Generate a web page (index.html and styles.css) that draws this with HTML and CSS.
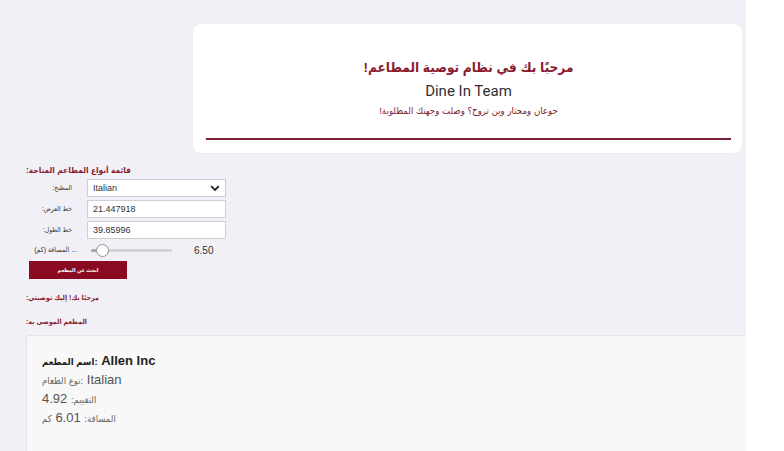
FILE: index.html
```html
<!DOCTYPE html>
<html lang="ar">
<head>
<meta charset="utf-8">
<title>Dine In Team</title>
<link rel="stylesheet" href="styles.css">
</head>
<body>
<div class="app">
  <div class="header-row">
    <div class="header-card">
      <h1 class="title" dir="rtl">مرحبًا بك في نظام توصية المطاعم!</h1>
      <div class="team">Dine In Team</div>
      <p class="subtitle" dir="rtl">جوعان ومحتار وين تروح؟ وصلت وجهتك المطلوبة!</p>
      <div class="rule"></div>
    </div>
  </div>

  <section class="form">
    <div class="form-title rtl">قائمة أنواع المطاعم المتاحة:</div>
    <div class="grid">
      <label class="lbl" dir="rtl">المطبخ:</label>
      <div class="box select">
        <span>Italian</span>
        <svg class="chev" width="10" height="7" viewBox="0 0 10 7"><path d="M1.2 1.2 L5 5 L8.8 1.2" fill="none" stroke="#222" stroke-width="1.8"/></svg>
      </div>
      <label class="lbl" dir="rtl">خط العرض:</label>
      <div class="box">21.447918</div>
      <label class="lbl" dir="rtl">خط الطول:</label>
      <div class="box">39.85996</div>
      <label class="lbl slbl">المسافة (كم) ...</label>
      <div class="slider">
        <div class="track"><div class="fill"></div><div class="thumb"></div></div>
        <span class="val">6.50</span>
      </div>
    </div>
    <button class="btn" dir="rtl">ابحث عن المطعم</button>
    <div class="note rtl">مرحبًا بك! إليك توصيتي:</div>
    <div class="note second rtl">المطعم الموصى به:</div>
  </section>

  <section class="card">
    <div class="name"><span class="ar">اسم المطعم:</span> Allen Inc</div>
    <div class="line"><span class="ar">نوع الطعام:</span> Italian</div>
    <div class="line"><span class="ar">التقييم:</span> 4.92</div>
    <div class="line"><span class="ar">المسافة:</span> 6.01 <span class="ar">كم</span></div>
  </section>
</div>
</body>
</html>
```

FILE: styles.css
```css
* { box-sizing: border-box; }
html, body { margin: 0; padding: 0; background: #ffffff; }
body { font-family: "Liberation Sans", "DejaVu Sans Condensed", "DejaVu Sans", sans-serif; }

.app {
  width: 746px;
  height: 451px;
  overflow: hidden;
  background: #f0f0f6;
  padding-top: 24px;
}

.header-row { padding-left: 193px; }
.header-card {
  width: 549px;
  height: 129px;
  background: #ffffff;
  border-radius: 8px;
  box-shadow: 0 0 2px rgba(0,0,0,0.04);
  padding: 33px 11px 0 13px;
  text-align: center;
}
.title {
  margin: 0;
  font-size: 13.5px;
  line-height: 22px;
  font-weight: bold;
  color: #8b1c2f;
}
.team {
  font-family: Roboto, "Liberation Sans", sans-serif;
  font-size: 15px;
  line-height: 22px;
  color: #2f2f33;
  margin-top: 1px;
}
.subtitle {
  margin: 0;
  font-size: 9.6px;
  line-height: 16px;
  color: #7a2030;
  margin-top: 1px;
}
.rule {
  margin-top: 19px;
  height: 2px;
  background: #7b2034;
}

.form { padding-left: 26px; margin-top: 10px; }
.rtl { direction: rtl; text-align: left; }
.form-title {
  font-size: 8.3px;
  line-height: 14px;
  font-weight: bold;
  color: #8b1c2f;
  width: 160px;
}
.grid {
  margin-top: 2px;
  display: grid;
  grid-template-columns: 56px 139px;
  grid-template-rows: 18px 18px 18px 16px;
  column-gap: 5px;
  row-gap: 3px;
  align-items: center;
}
.lbl {
  font-size: 6.7px;
  line-height: 10px;
  color: #333;
  text-align: right;
  padding-right: 10px;
}
.slbl { direction: ltr; padding-right: 5px; white-space: nowrap; font-size: 7px; }
.box {
  height: 18px;
  background: #ffffff;
  border: 1px solid #cfcfd2;
  font-size: 9px;
  color: #333;
  padding-left: 5px;
  display: flex;
  align-items: center;
}
.select { justify-content: space-between; padding-right: 5px; }
.chev { display: block; }
.slider {
  height: 16px;
  display: flex;
  align-items: center;
  padding-left: 4px;
}
.track {
  position: relative;
  width: 81px;
  height: 3px;
  background: #d3d3d6;
  border-radius: 2px;
}
.fill {
  width: 11px;
  height: 3px;
  background: #a9a9ad;
  border-radius: 2px;
}
.thumb {
  position: absolute;
  left: 5px;
  top: -5px;
  width: 13px;
  height: 13px;
  border-radius: 50%;
  background: #fff;
  border: 1px solid #8f8f94;
}
.val {
  margin-left: 22px;
  font-size: 10px;
  color: #333;
}
.btn {
  display: block;
  margin: 3px 0 0 3px;
  width: 98px;
  height: 18px;
  border: 0;
  background: #8a0a22;
  color: #fff;
  font-family: inherit;
  font-size: 5.4px;
  font-weight: bold;
  padding: 0;
}
.note {
  margin-top: 12px;
  font-size: 7px;
  line-height: 14px;
  font-weight: bold;
  color: #8b1c2f;
  width: 120px;
}
.note.second { margin-top: 10px; }

.card {
  margin: 6px 0 0 26px;
  background: #f8f8f8;
  border: 1px solid #e4e4e8;
  border-right: 0;
  border-radius: 3px 0 0 0;
  height: 140px;
  padding: 15px 0 0 15px;
}
.name {
  font-size: 13px;
  line-height: 19px;
  font-weight: bold;
  color: #222;
}
.line {
  font-size: 13px;
  line-height: 19px;
  color: #555;
}
.ar { font-size: 9.5px; line-height: 10px; }
.line .ar { color: #666; }
```
